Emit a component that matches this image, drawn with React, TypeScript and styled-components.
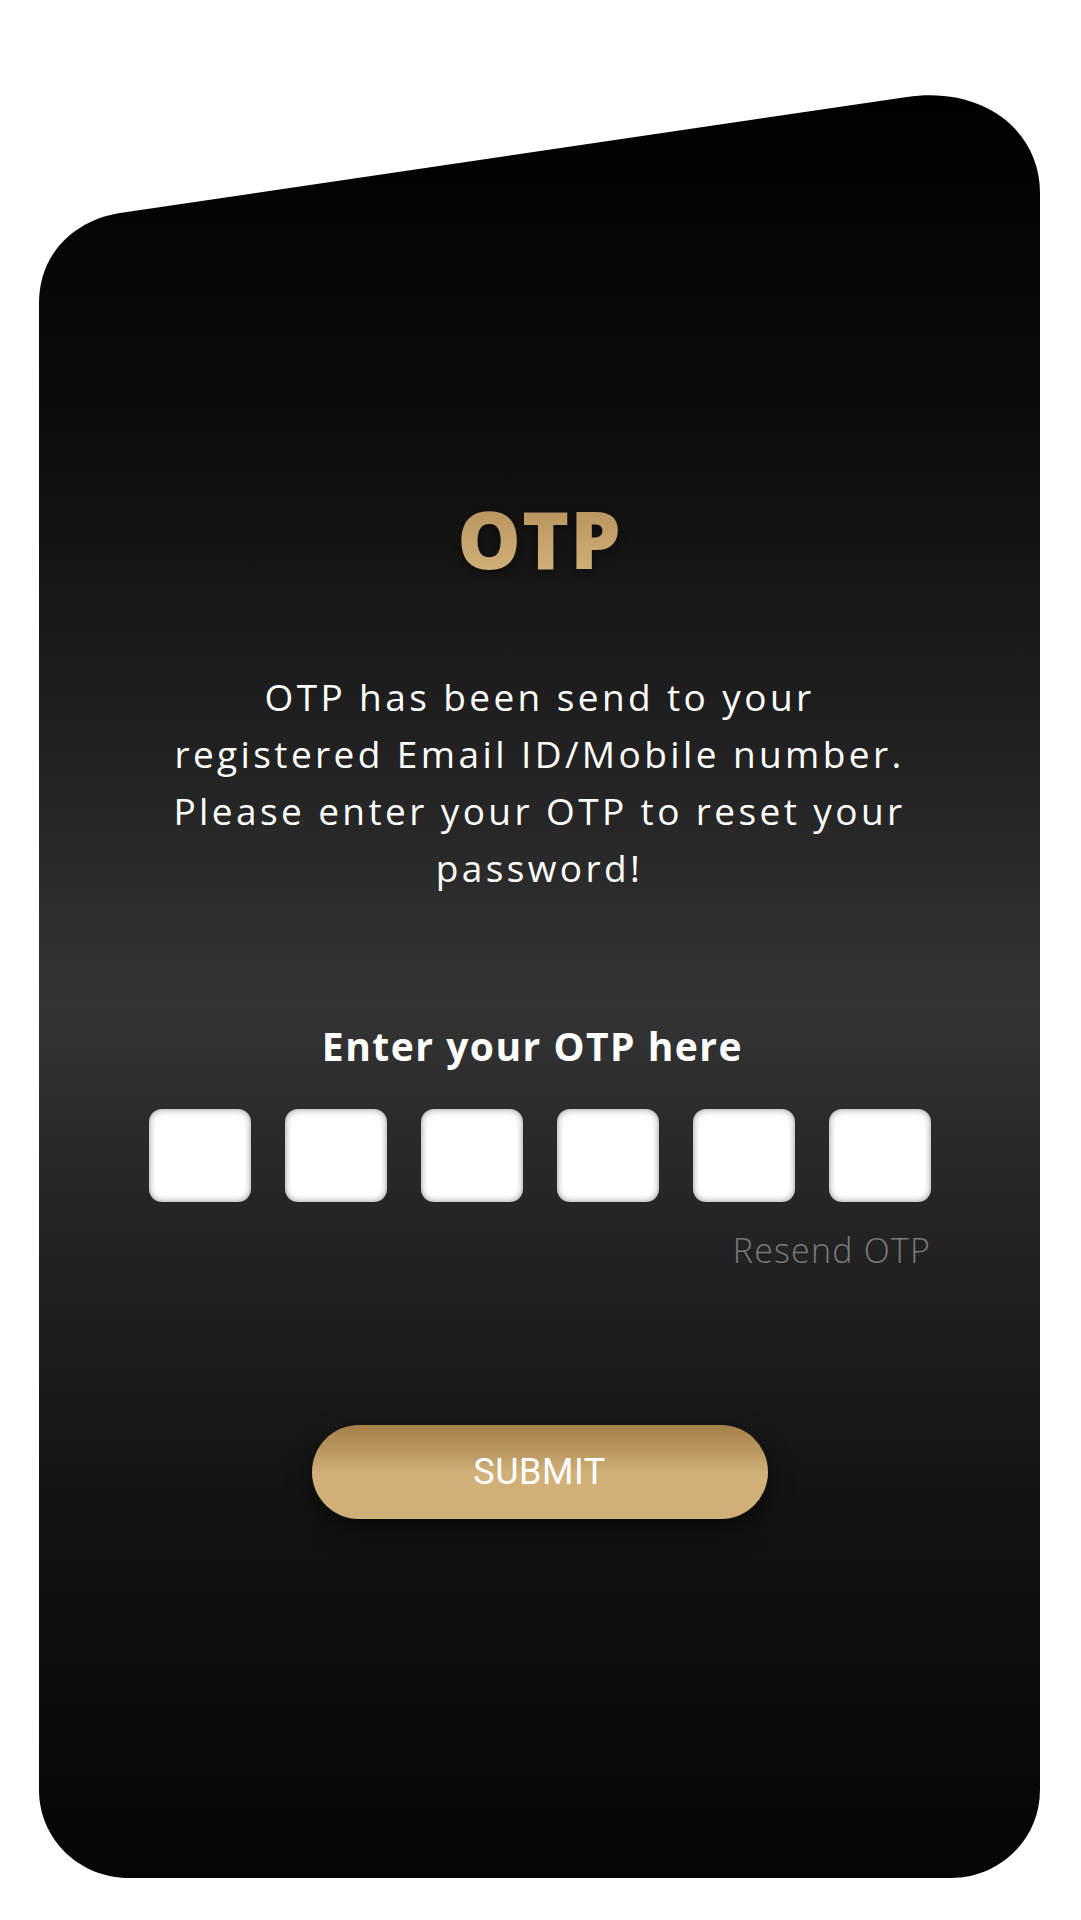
import React from 'react';
import styled, { createGlobalStyle } from 'styled-components';

const GlobalStyle = createGlobalStyle`
    html, body {
        margin: 0;
        padding: 0;
        background: #ffffff;
    }
    body {
        font-family: 'Open Sans', 'Liberation Sans', sans-serif;
    }
`;

const CARD_W = 1001;
const CARD_H = 1785;

// slanted top edge, rounded corners
const cardShape = `path('M 0 210 C 0 160 36 127 81 120 L 868 4 C 945 -7 1001 38 1001 100 L 1001 1697 C 1001 1746 961 1785 912 1785 L 90 1785 C 40 1785 0 1746 0 1697 Z')`;

export default function App() {
    const digits = [0, 1, 2, 3, 4, 5];

    return (
        <Page>
            <GlobalStyle />
            <Card>
                <Title>OTP</Title>
                <Message>
                    OTP has been send to your
                    <br />
                    registered Email ID/Mobile number.
                    <br />
                    Please enter your OTP to reset your
                    <br />
                    password!
                </Message>

                <Label>Enter your OTP here</Label>
                <OtpRow>
                    {digits.map((d) => (
                        <OtpBox key={d} maxLength={1} inputMode="numeric" aria-label={`Digit ${d + 1}`} />
                    ))}
                </OtpRow>
                <ResendRow>
                    <Resend>Resend OTP</Resend>
                </ResendRow>

                <SubmitButton type="button">SUBMIT</SubmitButton>
            </Card>
        </Page>
    );
}

const Page = styled.div`
    width: 1081px;
    min-height: 1920px;
    box-sizing: border-box;
    padding: 93px 41px 42px 39px;
`;

const Card = styled.div`
    width: ${CARD_W}px;
    height: ${CARD_H}px;
    clip-path: ${cardShape};
    background: linear-gradient(
        180deg,
        #000000 0%,
        #0c0c0c 18%,
        #1f1f1f 35%,
        #343434 51%,
        #252525 62%,
        #141414 78%,
        #050505 100%
    );
    display: flex;
    flex-direction: column;
    align-items: center;
    padding-top: 393px;
    box-sizing: border-box;
`;

const Title = styled.h1`
    margin: 0;
    font-family: 'Open Sans', sans-serif;
    font-weight: 800;
    font-size: 80px;
    line-height: 104px;
    letter-spacing: 1px;
    background: linear-gradient(180deg, #b08c56 0%, #d8b780 100%);
    -webkit-background-clip: text;
    background-clip: text;
    color: transparent;
    filter: drop-shadow(0 3px 4px rgba(0, 0, 0, 0.45));
`;

const Message = styled.p`
    margin: 78px 0 0;
    color: #ffffff;
    font-size: 37px;
    line-height: 57px;
    letter-spacing: 3.4px;
    text-align: center;
    font-weight: 400;
`;

const Label = styled.h2`
    margin: 125px 14px 0 0;
    color: #ffffff;
    font-size: 39px;
    font-weight: 700;
    line-height: 50px;
    letter-spacing: 1.5px;
`;

const OtpRow = styled.div`
    display: flex;
    gap: 34px;
    margin-top: 38px;
`;

const OtpBox = styled.input`
    width: 102px;
    height: 93px;
    box-sizing: border-box;
    border: none;
    outline: none;
    border-radius: 13px;
    background: #ffffff;
    box-shadow: inset 0 0 7px rgba(0, 0, 0, 0.45);
    text-align: center;
    font-size: 40px;
    font-family: inherit;
`;

const ResendRow = styled.div`
    width: 783px;
    display: flex;
    justify-content: flex-end;
    margin-top: 26px;
`;

const Resend = styled.span`
    color: #7a7a7a;
    font-size: 34px;
    font-weight: 300;
    line-height: 44px;
    letter-spacing: 1.2px;
    cursor: pointer;
`;

const SubmitButton = styled.button`
    margin-top: 153px;
    width: 456px;
    height: 94px;
    border: none;
    border-radius: 47px;
    background: linear-gradient(180deg, #a67f48 0%, #bb9963 30%, #d1b07a 52%, #cfae78 100%);
    box-shadow: 0 10px 24px rgba(0, 0, 0, 0.55);
    color: #ffffff;
    font-family: 'Roboto', sans-serif;
    font-size: 36px;
    font-weight: 400;
    letter-spacing: 0.5px;
    cursor: pointer;
`;
